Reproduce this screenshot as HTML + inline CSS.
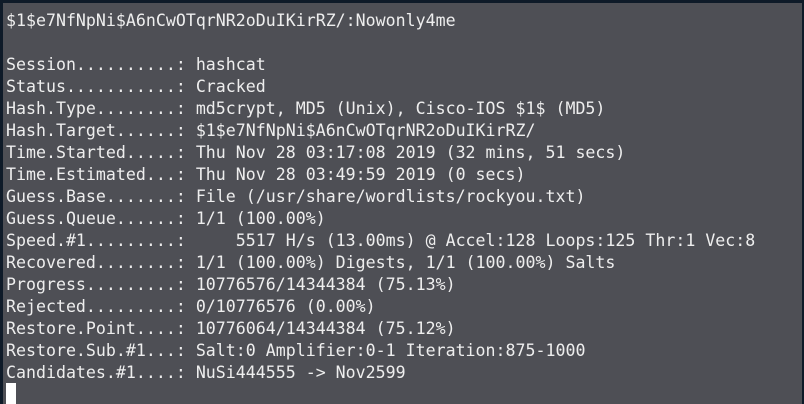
<!DOCTYPE html>
<html><head><style>
html,body{margin:0;padding:0}
body{width:804px;height:404px;background:#0e1a28;position:relative;overflow:hidden}
#t{position:absolute;left:3px;top:3px;width:799px;height:401px;background:#4e4f55}
pre{margin:0;position:absolute;left:3px;top:7px;font-family:"DejaVu Sans Mono","Liberation Mono",monospace;font-size:16.6px;line-height:22px;color:#eeeeee}
#c{position:absolute;left:3px;top:380px;width:10px;height:21px;background:#fff}
</style></head><body><div id="t"><pre>$1$e7NfNpNi$A6nCwOTqrNR2oDuIKirRZ/:Nowonly4me

Session..........: hashcat
Status...........: Cracked
Hash.Type........: md5crypt, MD5 (Unix), Cisco-IOS $1$ (MD5)
Hash.Target......: $1$e7NfNpNi$A6nCwOTqrNR2oDuIKirRZ/
Time.Started.....: Thu Nov 28 03:17:08 2019 (32 mins, 51 secs)
Time.Estimated...: Thu Nov 28 03:49:59 2019 (0 secs)
Guess.Base.......: File (/usr/share/wordlists/rockyou.txt)
Guess.Queue......: 1/1 (100.00%)
Speed.#1.........:     5517 H/s (13.00ms) @ Accel:128 Loops:125 Thr:1 Vec:8
Recovered........: 1/1 (100.00%) Digests, 1/1 (100.00%) Salts
Progress.........: 10776576/14344384 (75.13%)
Rejected.........: 0/10776576 (0.00%)
Restore.Point....: 10776064/14344384 (75.12%)
Restore.Sub.#1...: Salt:0 Amplifier:0-1 Iteration:875-1000
Candidates.#1....: NuSi444555 -&gt; Nov2599</pre><div id="c"></div></div></body></html>
